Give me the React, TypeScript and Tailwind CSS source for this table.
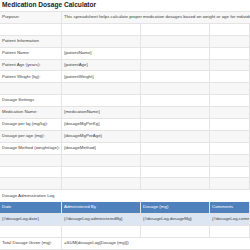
const settingsRows: [string, string][] = [
  ['Purpose:', 'This spreadsheet helps calculate proper medication dosages based on weight or age for individual patients.'],
  ['', ''],
  ['Patient Information', ''],
  ['Patient Name:', '{patientName}'],
  ['Patient Age (years):', '{patientAge}'],
  ['Patient Weight (kg):', '{patientWeight}'],
  ['', ''],
  ['Dosage Settings', ''],
  ['Medication Name:', '{medicationName}'],
  ['Dosage per kg (mg/kg):', '{dosageMgPerKg}'],
  ['Dosage per age (mg):', '{dosageMgPerAge}'],
  ['Dosage Method (weight/age):', '{dosageMethod}'],
  ['', ''],
  ['', ''],
  ['', ''],
];

const logColumns = ['Date', 'Administered By', 'Dosage (mg)', 'Comments'];
const logRow = ['{#dosageLog.date}', '{#dosageLog.administeredBy}', '{#dosageLog.dosageMg}', '{#dosageLog.comments}'];

const rowBase = 'grid grid-cols-[62px_79px_69px_1fr] h-[11.9px] border-b border-[#e4e4e4]';
const cell = 'border-r border-[#e4e4e4] pl-[2px] flex items-center whitespace-nowrap overflow-hidden';

export default function App() {
  return (
    <div className="w-[250px] h-[250px] overflow-hidden bg-white text-[#404040] text-[4.4px] leading-none font-['Liberation_Sans',Arial,sans-serif]">
      {/* Title */}
      <div className="h-[12px] flex items-center pl-[2px] border-b border-[#e4e4e4]">
        <h1 className="text-[6.6px] font-bold text-[#222]">Medication Dosage Calculator</h1>
      </div>

      {/* Settings table */}
      {settingsRows.map(([label, value], i) => {
        const striped = i % 2 === 0 ? 'bg-[#f7f7f7]' : 'bg-white';
        if (i === 0) {
          return (
            <div key={i} className={`${rowBase} ${striped}`}>
              <div className={cell}>{label}</div>
              <div className="col-span-3 pl-[2px] flex items-center whitespace-nowrap overflow-hidden">{value}</div>
            </div>
          );
        }
        return (
          <div key={i} className={`${rowBase} ${striped}`}>
            <div className={cell}>{label}</div>
            <div className={cell}>{value}</div>
            <div className={cell} />
            <div className={cell} />
          </div>
        );
      })}

      {/* Log */}
      <div className="h-[11.9px] flex items-center pl-[2px]">Dosage Administration Log</div>
      <div className={`${rowBase} bg-[#4f81bd] text-white border-[#6f97c8]`}>
        {logColumns.map((c) => (
          <div key={c} className={`${cell} border-[#7aa0cf]`}>{c}</div>
        ))}
      </div>
      <div className={`${rowBase} bg-[#dce6f2]`}>
        {logRow.map((c) => (
          <div key={c} className={`${cell} border-[#c9d6e8]`}>{c}</div>
        ))}
      </div>
      <div className={`${rowBase} bg-white`}>
        <div className={cell} />
        <div className={cell} />
        <div className={cell} />
        <div className={cell} />
      </div>
      <div className={`${rowBase} bg-white`}>
        <div className={cell}>Total Dosage Given (mg):</div>
        <div className="col-span-3 pl-[2px] flex items-center whitespace-nowrap overflow-hidden">=SUM(dosageLog[Dosage (mg)])</div>
      </div>
    </div>
  );
}
